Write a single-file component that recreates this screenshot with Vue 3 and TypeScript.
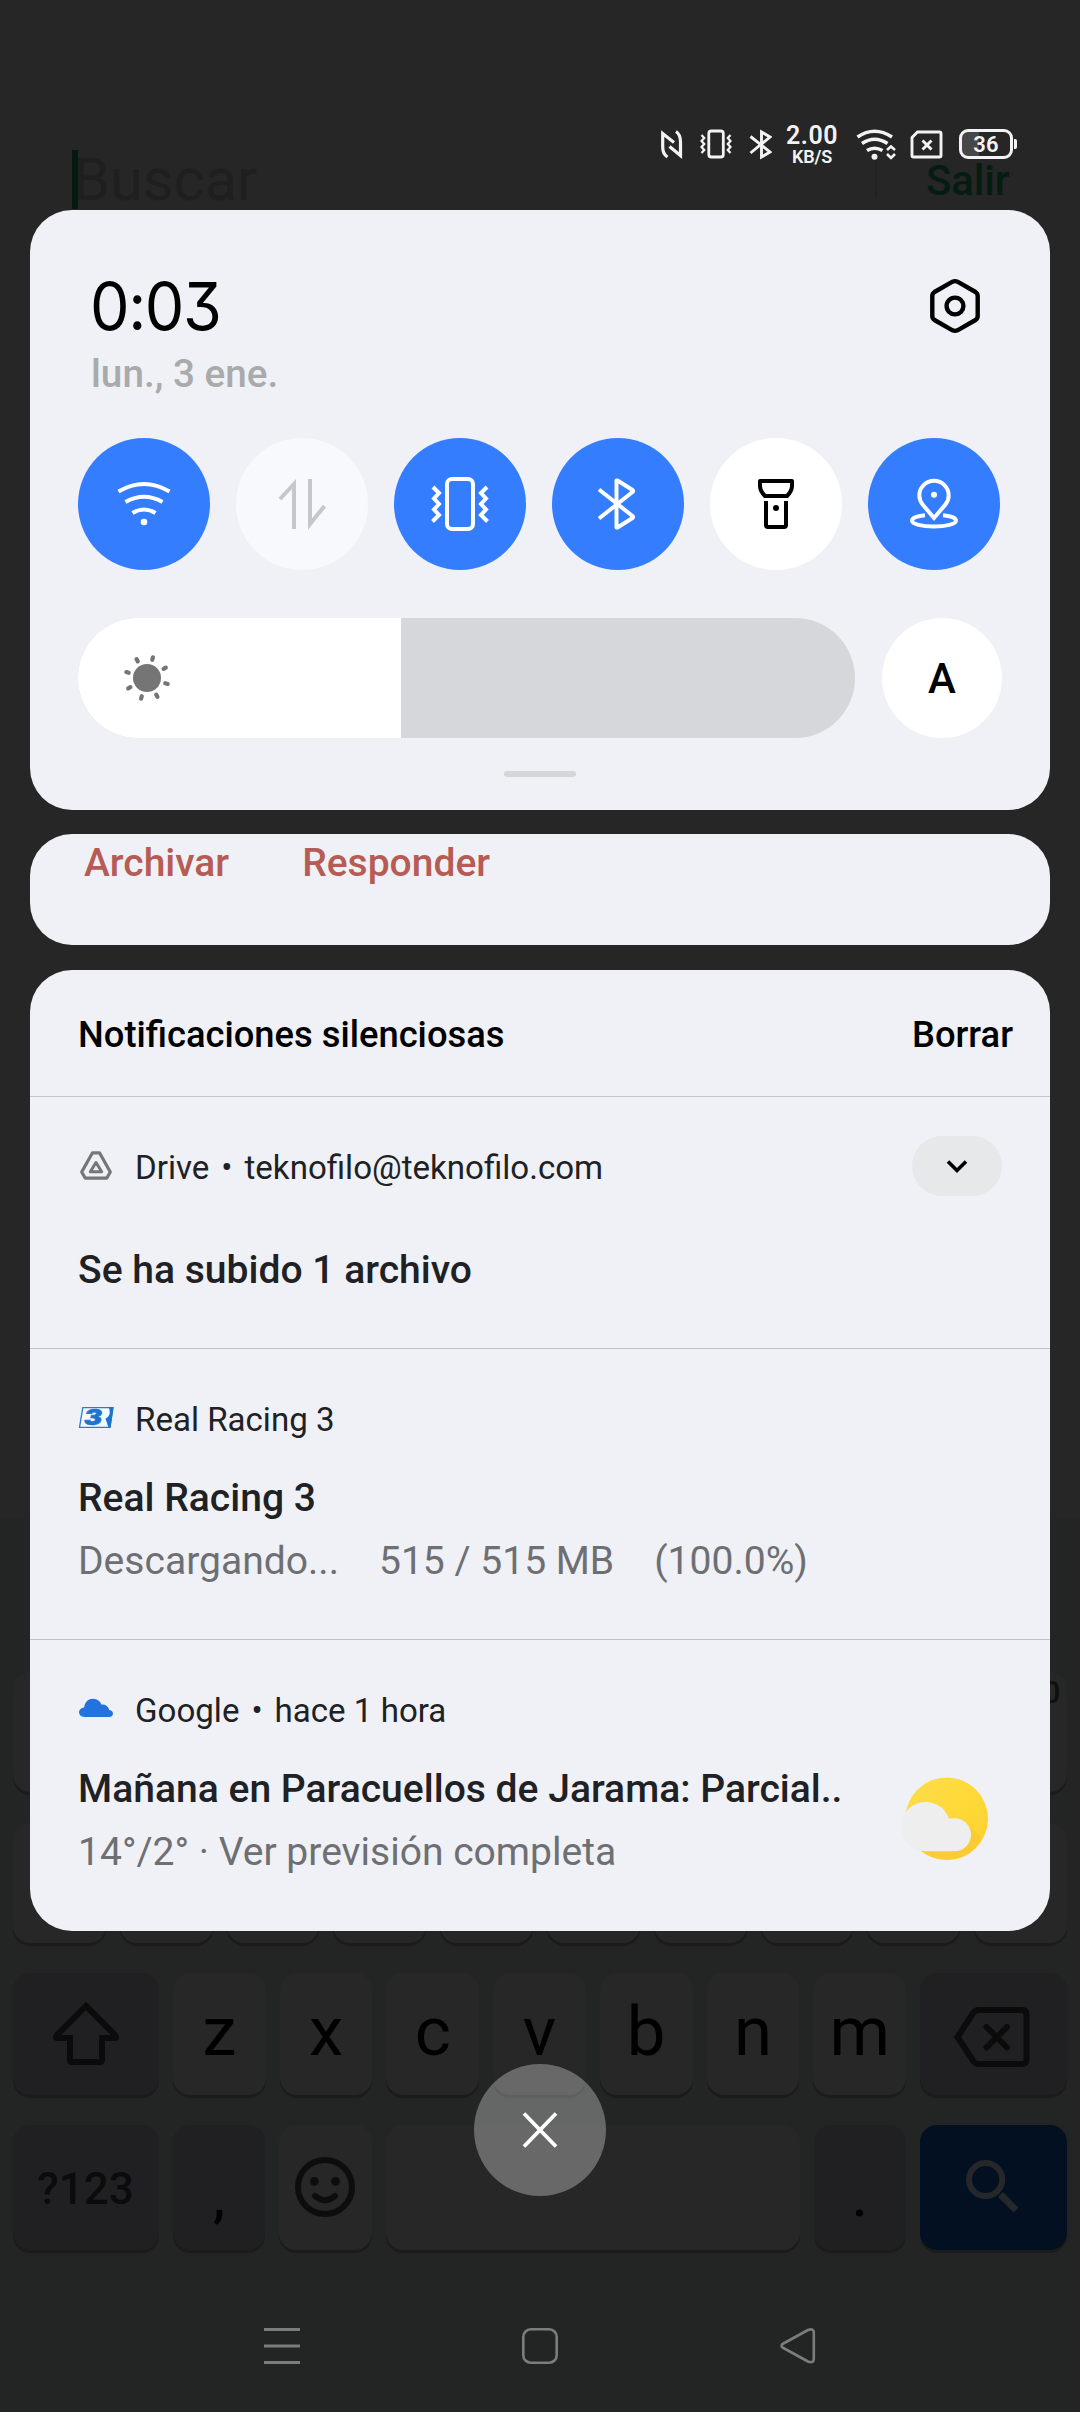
<script setup lang="ts">
interface Tile {
  name: string
  state: 'on' | 'off' | 'disabled'
}

const tiles: Tile[] = [
  { name: 'wifi', state: 'on' },
  { name: 'data', state: 'disabled' },
  { name: 'vibrate', state: 'on' },
  { name: 'bluetooth', state: 'on' },
  { name: 'flashlight', state: 'off' },
  { name: 'location', state: 'on' },
]

const brightness = 41.57
const sunRays = [16, 61, 106, 151, 196, 241, 286, 331]
const letters = ['z', 'x', 'c', 'v', 'b', 'n', 'm']
</script>

<template>
  <div class="screen">
    <div class="app">
      <div class="search">
        <span class="caret"></span>
        <span class="placeholder">Buscar</span>
        <span class="rule"></span>
        <span class="exit">Salir</span>
      </div>
      <div class="keyboard">
        <div class="row r1">
          <div v-for="n in 10" :key="n" class="key"><span v-if="n === 10" class="hint">0</span></div>
        </div>
        <div class="row r2">
          <div v-for="n in 10" :key="n" class="key"></div>
        </div>
        <div class="row r3">
          <div class="key fn wide">
            <svg width="146" height="122" viewBox="13 1973 146 122" fill="none" stroke="#0b0b0b" stroke-width="6">
              <path d="M86 2006L57 2035Q54.500 2038 58 2038H70V2060Q70 2062 72 2062H100Q102 2062 102 2060V2038H114Q117.500 2038 115 2035Z" />
            </svg>
          </div>
          <div v-for="l in letters" :key="l" class="key letter">{{ l }}</div>
          <div class="key fn wider">
            <svg width="147" height="122" viewBox="920 1973 147 122" fill="none" stroke="#0b0b0b" stroke-width="6">
              <path d="M957.500 2037L973.500 2012.500Q975.500 2010 978.500 2010H1022Q1026.500 2010 1026.500 2014.500V2059.500Q1026.500 2064 1022 2064H978.500Q975.500 2064 973.500 2061.500Z" />
              <path stroke-linecap="round" d="M986.500 2027L1007 2047.500M1007 2027L986.500 2047.500" />
            </svg>
          </div>
        </div>
        <div class="row r4">
          <div class="key fn wide sym">?123</div>
          <div class="key fn one punct">,</div>
          <div class="key one">
            <svg width="92" height="125" viewBox="279 2125 92 125" fill="none" stroke="#0d0d0d" stroke-width="6">
              <circle cx="325" cy="2187" r="27" />
              <path stroke-linecap="round" d="M315 2196Q325 2204.500 335 2196" />
              <g fill="#0d0d0d" stroke="none"><circle cx="314.300" cy="2181.300" r="4.400" /><circle cx="335.500" cy="2181.300" r="4.400" /></g>
            </svg>
          </div>
          <div class="key space"></div>
          <div class="key fn one punct">.</div>
          <div class="key go wider">
            <svg width="147" height="125" viewBox="920 2125 147 125" fill="none" stroke="#262728" stroke-width="6">
              <circle cx="985.600" cy="2179.500" r="16.600" />
              <path stroke-width="6.800" d="M1000.500 2194.500L1016 2210" />
            </svg>
          </div>
        </div>
      </div>
      <div class="nav">
        <svg width="36" height="38" viewBox="264 2327 36 38" stroke="#7b7d7c" stroke-width="3.200">
          <path d="M264 2329.500H300M264 2346H300M264 2362.500H300" />
        </svg>
        <svg class="home" width="38" height="38" viewBox="521 2327 38 38" fill="none" stroke="#7b7d7c" stroke-width="2.600">
          <rect x="523.300" y="2329.300" width="33.400" height="33.400" rx="7.500" />
        </svg>
        <svg width="38" height="38" viewBox="779 2327 38 38" fill="none" stroke="#7b7d7c" stroke-width="2.600" stroke-linejoin="round">
          <path d="M782.500 2344Q780.500 2346 782.500 2347.500L808 2361.500Q813.800 2363.500 813.800 2359V2332.500Q813.800 2328 808 2330Z" />
        </svg>
      </div>
    </div>

    <div class="shade">
      <div class="status">
        <svg class="nfc" width="22" height="30" viewBox="661 129 22 30" fill="none" stroke="#f3f3f5" stroke-width="3.200">
          <path d="M667.500 157Q662.700 154 662.700 147V133.500L674 142.500" />
          <path d="M676 131.500Q680.500 134.500 680.500 142V155.500L669.500 146.500" />
        </svg>
        <svg class="vib" width="32" height="30" viewBox="699.500 129 32 30" fill="none" stroke="#f3f3f5" stroke-width="2.800">
          <rect x="708.300" y="131" width="14.500" height="26" rx="2.500" />
          <path stroke-width="2.300" d="M701 135L703.700 138L701 141L703.700 144L701 147L703.700 150L701 153M730 135L727.300 138L730 141L727.300 144L730 147L727.300 150L730 153" />
        </svg>
        <svg class="bt" width="23" height="31" viewBox="748.500 128.500 23 31" fill="none" stroke="#f3f3f5" stroke-width="2.900">
          <path d="M750 136L769.500 151.500L761 156.500V131.500L769.500 136.500L750 152.500" />
        </svg>
        <div class="rate"><span class="num">2.00</span><span class="unit">KB/S</span></div>
        <svg class="wf" width="40" height="31" viewBox="855.500 128.500 40 31" fill="none" stroke="#f3f3f5" stroke-width="3.600">
          <path d="M857 136.500Q874 125 891.500 136.500M861.500 143Q874 134.500 887 143M866.500 150Q874 145.500 882 150" />
          <circle cx="874" cy="156.200" r="3" fill="#f3f3f5" stroke="none" />
          <path stroke-width="2.600" d="M886.500 149.500L890.500 146L894.500 149.500M886.500 153.500L890.500 157.500L894.500 153.500" />
        </svg>
        <svg class="sim" width="33" height="29" viewBox="909.500 129.500 33 29" fill="none" stroke="#f3f3f5" stroke-width="2.900">
          <path d="M917 131.500H939Q940.500 131.500 940.500 133V155Q940.500 156.500 939 156.500H913Q911.500 156.500 911.500 155V137Z" />
          <path d="M922 140L931 149M931 140L922 149" />
        </svg>
        <div class="battery"><div class="cell">36</div><div class="cap"></div></div>
      </div>

      <section class="card quick">
        <div class="head">
          <div>
            <div class="clock">0:03</div>
            <div class="date">lun., 3 ene.</div>
          </div>
          <svg class="gear" width="56" height="60" viewBox="-28 -30 56 60" fill="none" stroke="#000" stroke-width="4.400">
            <path d="M-2.500 -24.300Q0 -25.500 2.500 -24.300L20.500 -14Q22.700 -12.600 22.700 -10V10Q22.700 12.600 20.500 14L2.500 24.300Q0 25.500 -2.500 24.300L-20.500 14Q-22.700 12.600 -22.700 10V-10Q-22.700 -12.600 -20.500 -14Z" />
            <circle r="8.400" />
          </svg>
        </div>

        <div class="tiles">
          <div v-for="t in tiles" :key="t.name" class="tile" :class="t.state">
            <svg width="64" height="64" viewBox="-32 -32 64 64" fill="none" stroke="currentColor" stroke-width="4">
              <template v-if="t.name === 'wifi'">
                <path d="M-25.500 -12.500Q0 -27.500 25.500 -12.500M-18.500 -2Q0 -12.500 18.500 -2M-11.500 9Q0 2 11.500 9" />
                <circle cy="18" r="3.300" fill="currentColor" stroke="none" />
              </template>
              <path v-else-if="t.name === 'data'" d="M-22 -5L-8 -20V25M8 -25V20L22.500 2" />
              <template v-else-if="t.name === 'vibrate'">
                <rect x="-13" y="-25" width="26" height="50" rx="5" />
                <path d="M-27 -17L-21 -11L-26 -5.500L-21 0L-26 5.500L-21 11L-27.500 17.500M27 -17L21 -11L26 -5.500L21 0L26 5.500L21 11L27.500 17.500" />
              </template>
              <path v-else-if="t.name === 'bluetooth'" stroke-linejoin="round" d="M-19 -14.500L14.500 12Q15.500 13 14.500 14L-.5 23.500H-1.500V-23.500H-.5L14.500 -14Q15.500 -13 14.500 -12L-19 14.500" />
              <template v-else-if="t.name === 'flashlight'">
                <path stroke-linejoin="round" d="M-16 -23H16V-18Q16 -13 11 -8H-11Q-16 -13 -16 -18Z" />
                <path d="M-10 -3V21Q-10 23 -8 23H8Q10 23 10 21V-3" />
                <circle cy="4" r="3" fill="currentColor" stroke="none" />
              </template>
              <template v-else>
                <path d="M0 14L-11 1C-13.500 -2 -14.700 -5 -14.700 -8.500A14.700 14.700 0 0 1 14.700 -8.500C14.700 -5 13.500 -2 11 1Z" />
                <path d="M-9 11.300C-17 12 -22 14 -22 16.800C-22 20 -12 22.500 0 22.500S22 20 22 16.800C22 14 17 12 9 11.300" />
                <circle cy="-9.300" r="3" fill="currentColor" stroke="none" />
              </template>
            </svg>
          </div>
        </div>

        <div class="bright">
          <div class="slider">
            <div class="fill" :style="{ width: brightness + '%' }">
              <svg width="50" height="50" viewBox="-25 -25 50 50" fill="#757575" stroke="#757575">
                <circle r="14" stroke="none" />
                <path v-for="a in sunRays" :key="a" :transform="`rotate(${a})`" d="M0 -19V-21.500" stroke-width="4.200" stroke-linecap="round" />
              </svg>
            </div>
          </div>
          <div class="auto">A</div>
        </div>
        <div class="grip"></div>
      </section>

      <section class="card actions">
        <span>Archivar</span><span>Responder</span>
      </section>

      <section class="card list">
        <header class="bar"><span>Notificaciones silenciosas</span><span>Borrar</span></header>

        <article class="item drive">
          <div class="meta">
            <svg width="36" height="34" viewBox="78 1149 36 34" fill="none" stroke="#757678" stroke-width="3.200" stroke-linejoin="round">
              <path d="M92.500 1152.800H99.500L110.300 1172L106.700 1178.200H85.300L81.700 1172Z" />
              <path stroke-width="3" d="M96 1162.500L101.700 1171.800H90.300Z" />
            </svg>
            <span>Drive<i>•</i>teknofilo@teknofilo.com</span>
            <div class="expand">
              <svg width="24" height="16" viewBox="-12 -8 24 16" fill="none" stroke="#000" stroke-width="3.600"><path d="M-9 -4.500L0 4.500L9 -4.500" /></svg>
            </div>
          </div>
          <h3>Se ha subido 1 archivo</h3>
        </article>

        <article class="item racing">
          <div class="meta">
            <svg width="36" height="34" viewBox="78 1401 36 34">
              <path d="M82.800 1407.700H113L110 1427.300H79.500Z" fill="#f4f9ff" stroke="#2a7bd4" stroke-width="1.300" />
              <path d="M108.500 1407H113.500L110.500 1427.500H108.500L105.500 1418.500Q109.500 1416.500 109.800 1412.500Q110 1409 108.500 1407Z" fill="#1c74d0" />
              <text x="84" y="1425.200" class="three" textLength="18" lengthAdjust="spacingAndGlyphs">3</text>
            </svg>
            <span>Real Racing 3</span>
          </div>
          <h3>Real Racing 3</h3>
          <p class="cols"><span>Descargando...</span><span>515 / 515 MB</span><span>(100.0%)</span></p>
        </article>

        <article class="item weather">
          <div class="meta">
            <svg width="36" height="34" viewBox="78 1692 36 34" fill="#2372e0">
              <path d="M84.500 1717Q79 1716.500 79 1712Q79.500 1708 84 1707.500Q85.500 1699 93 1698.800Q99 1699 101.500 1704.500Q107.500 1704 109.300 1710Q113 1710.800 113 1713.800Q112.500 1717 109 1717Z" />
            </svg>
            <span>Google<i>•</i>hace 1 hora</span>
          </div>
          <div class="body">
            <div>
              <h3>Mañana en Paracuellos de Jarama: Parcial..</h3>
              <p>14°/2° · Ver previsión completa</p>
            </div>
            <svg class="sun" width="92" height="92" viewBox="898 1773 92 92">
              <defs>
                <linearGradient id="sunFill" x1="0" y1="0" x2="1" y2="1"><stop offset="0" stop-color="#fedd4c" /><stop offset=".6" stop-color="#fdd835" /><stop offset="1" stop-color="#fbcd30" /></linearGradient>
                <linearGradient id="sunShade" x1="0" y1="0" x2=".8" y2="1"><stop offset=".2" stop-color="#f6b92b" /><stop offset="1" stop-color="#f9c934" /></linearGradient>
              </defs>
              <circle cx="946.700" cy="1818.700" r="41.300" fill="url(#sunFill)" />
              <path d="M949 1818L971 1828L981.500 1838Q972 1860 946.700 1860Q931 1859.500 921.500 1851Z" fill="url(#sunShade)" opacity=".5" />
              <path d="M925.500 1851.300A24.700 24.700 0 1 1 949 1818.500Q950 1818.200 954.500 1818.200A16.500 16.500 0 0 1 954.500 1851.300Z" fill="#eeeeee" />
            </svg>
          </div>
        </article>
      </section>

      <div class="close">
        <svg width="40" height="40" viewBox="-20 -20 40 40" stroke="#fff" stroke-width="3.800"><path d="M-16 -16.500L16 16.500M16 -16.500L-16 16.500" /></svg>
      </div>
    </div>
  </div>
</template>

<style>
body { background: #262626; }
</style>

<style scoped>
* { box-sizing: border-box; margin: 0; }
svg { display: block; flex: none; }
.screen {
  display: grid;
  width: 1080px;
  height: 2412px;
  overflow: hidden;
  background: #262626;
  font-family: Roboto, "Liberation Sans", sans-serif;
  white-space: nowrap;
}
.app, .shade { grid-area: 1 / 1; min-width: 0; display: flex; flex-direction: column; }
.shade { z-index: 1; align-items: center; }

/* dimmed application */
.search { height: 1519px; display: flex; align-items: flex-start; padding: 150px 0 0 72px; }
.caret { width: 6px; height: 59px; background: #041a10; }
.placeholder { width: 803px; margin-left: -6px; font-size: 59.5px; line-height: 60px; color: #1f1f1f; }
.rule { width: 2px; height: 38px; margin-top: 10px; background: #222; }
.exit { margin: 7px 0 0 49px; font-size: 42px; line-height: 48px; font-weight: 500; color: #051c12; letter-spacing: -.2px; }
.caret, .placeholder, .rule, .exit { flex: none; }
.placeholder { padding-left: 1px; }
.keyboard { height: 762px; padding: 153px 13px 0; background: #232524; display: flex; flex-direction: column; }
.row { display: flex; gap: 14px; flex: none; }
.r1, .r2 { height: 120px; margin-bottom: 31px; }
.r2 { margin-bottom: 30px; }
.r3 { height: 122px; margin-bottom: 30px; }
.r4 { height: 125px; }
.key {
  flex: 1 1 0; min-width: 0; display: flex; justify-content: center;
  border-radius: 17px; background: #272727; box-shadow: 0 3px 0 #1b1b1b; color: #000;
}
.hint { margin-left: 62px; padding-top: 4px; font-size: 31px; line-height: 34px; font-weight: 500; color: #101010; }
.fn { background: #202022; }
.wide { flex: 0 0 146px; }
.wider { flex: 0 0 147px; }
.one { flex: 0 0 92.3px; }
.go { background: #031022; }
.letter { font-size: 69px; line-height: 117px; }
.sym { font-size: 44px; line-height: 128px; font-weight: 500; color: #0b0b0b; padding-right: 1px; }
.punct { font-size: 54px; line-height: 146px; font-weight: 500; }
.nav { flex: 1; display: flex; background: #232524; border-top: 1px solid #262525; padding: 45px 0 0 264px; }
.home { margin: 0 220px 0 221px; }

/* status bar */
.status { width: 1080px; height: 210px; flex: none; display: flex; align-items: flex-start; padding: 129px 0 0 661px; }
.vib { margin-left: 16.5px; }
.bt { margin-left: 17px; }
.rate { width: 54px; margin: -7.5px 0 0 13.5px; display: flex; flex-direction: column; align-items: center; color: #f3f3f5; }
.num { font-size: 25px; line-height: 28px; font-weight: 600; letter-spacing: .5px; }
.unit { font-size: 18px; line-height: 17px; margin-top: -1.5px; font-weight: 600; letter-spacing: -.2px; }
.wf { margin-left: 16.5px; }
.sim { margin: .5px 0 0 14px; }
.battery { margin-left: 16.5px; display: flex; align-items: center; }
.cell {
  width: 54px; height: 30px; border: 3px solid #f3f3f5; border-radius: 9px; text-align: center;
  background: linear-gradient(90deg, #474747 36%, #262626 36%);
  color: #f3f3f5; font-size: 22px; line-height: 25px; font-weight: 600; letter-spacing: .2px;
}
.cap { width: 3px; height: 10px; margin-left: 1px; background: #f3f3f5; border-radius: 0 2px 2px 0; }

/* cards */
.card { width: 1020px; flex: none; background: #f0f1f6; border-radius: 42px; overflow: hidden; }
.quick { height: 600px; padding: 58px 48px 0; }
.head { height: 170px; display: flex; justify-content: space-between; padding: 0 19.5px 0 13px; }
.clock { font: 400 66px/76px Inter, Roboto, sans-serif; font-feature-settings: "cv09" 1; color: #000; letter-spacing: -1.5px; transform: scaleX(.95); transform-origin: 0 50%; margin-left: -1px; }
.date { font-size: 38.7px; line-height: 46px; margin-top: 7px; font-weight: 500; color: #a9aaac; }
.gear { margin-top: 8px; }
.tiles { display: flex; gap: 26px; }
.tile { width: 132px; height: 132px; flex: none; border-radius: 50%; display: flex; align-items: center; justify-content: center; }
.on { background: #347dff; color: #fff; }
.off { background: #fff; color: #000; }
.disabled { background: #f8f9fc; color: #c6c7c9; }
.bright { display: flex; gap: 27px; margin-top: 48px; }
.slider { width: 777px; height: 120px; flex: none; border-radius: 60px; overflow: hidden; background: #d5d7da; }
.fill { height: 100%; background: #fff; padding: 35px 0 0 43.5px; }
.auto { width: 120px; height: 120px; flex: none; border-radius: 50%; background: #fff; text-align: center; font-size: 42px; line-height: 121px; font-weight: 500; }
.grip { width: 72px; height: 6px; margin: 33px auto 0; border-radius: 3px; background: #d5d6d8; }
.actions { height: 111px; margin-top: 24px; padding: 6px 0 0 54px; display: flex; gap: 73px; font-size: 39px; line-height: 46px; font-weight: 500; color: #b65c55; }
.list { height: 961px; margin-top: 25px; }
.bar { height: 127px; padding: 43.5px 37px 0 48px; display: flex; justify-content: space-between; border-bottom: 1px solid #c5c6cb; font-size: 36.35px; line-height: 42px; font-weight: 500; color: #000; }
.item { padding: 39px 48px 0; border-bottom: 1px solid #c0c1c6; }
.drive { height: 252px; }
.racing { height: 291px; }
.weather { height: 291px; border: 0; }
.meta { height: 60px; display: flex; align-items: center; font-size: 33.1px; color: #202124; }
.meta > svg { margin-right: 21px; }
.meta > span { padding-top: 2px; }
.meta i { font-style: normal; margin: 0 12px; }
.expand { width: 90px; height: 60px; margin-left: auto; border-radius: 30px; background: #e7e8ea; display: flex; align-items: center; justify-content: center; }
h3 { font-size: 39.05px; line-height: 46px; font-weight: 500; color: #202124; margin-top: 27px; }
.drive h3 { margin-top: 51px; }
p { font-size: 39.05px; line-height: 46px; margin-top: 17px; color: #6e6f72; }
.cols { display: flex; gap: 40px; }
.body { display: flex; justify-content: space-between; }
.sun { margin: 34px 12px 0 0; }
.three { font: italic 900 21px Inter, sans-serif; fill: #1c74d0; stroke: #1c74d0; stroke-width: .6px; }

.close { width: 132px; height: 132px; margin-top: 133px; flex: none; border-radius: 50%; background: rgba(255, 255, 255, .3); display: flex; align-items: center; justify-content: center; }
</style>
